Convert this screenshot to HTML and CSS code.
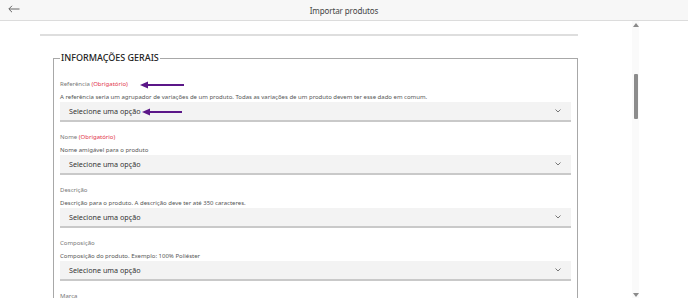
FILE: index.html
```html
<!DOCTYPE html>
<html lang="pt-BR">
  <head>
    <meta charset="UTF-8" />
    <meta name="viewport" content="width=device-width, initial-scale=1.0" />
    <title>Importar produtos</title>
    <link rel="stylesheet" href="styles.css">
  </head>
  <body>
    <header class="topbar">
      <button class="back-btn" aria-label="Voltar">
        <svg width="12" height="8" viewBox="0 0 12 8">
          <path d="M11.5 4H1 M4 0.8 L0.8 4 L4 7.2" fill="none" stroke="#666" stroke-width="1"/>
        </svg>
      </button>
      <h1>Importar produtos</h1>
    </header>

    <div class="main">
      <div class="content">
        <div class="divider"></div>

        <fieldset class="section">
          <legend>INFORMAÇÕES GERAIS</legend>

          <div class="field">
            <label>Referência <span class="req">(Obrigatório)</span></label>
            <svg class="pointer pointer-label" width="44" height="8" viewBox="0 0 44 8">
              <path d="M6 4H44" stroke="#5b1788" stroke-width="2"/>
              <path d="M0 4L8 0.5V7.5Z" fill="#5b1788"/>
            </svg>
            <p class="hint">A referência seria um agrupador de variações de um produto. Todas as variações de um produto devem ter esse dado em comum.</p>
            <div class="select">
              <span>Selecione uma opção</span>
              <svg class="chevron" width="6" height="4" viewBox="0 0 6 4"><path d="M0.5 0.5L3 3L5.5 0.5" fill="none" stroke="#777" stroke-width="1"/></svg>
            </div>
            <svg class="pointer pointer-select" width="40" height="8" viewBox="0 0 40 8">
              <path d="M6 4H40" stroke="#5b1788" stroke-width="2"/>
              <path d="M0 4L8 0.5V7.5Z" fill="#5b1788"/>
            </svg>
          </div>

          <div class="field">
            <label>Nome <span class="req">(Obrigatório)</span></label>
            <p class="hint">Nome amigável para o produto</p>
            <div class="select">
              <span>Selecione uma opção</span>
              <svg class="chevron" width="6" height="4" viewBox="0 0 6 4"><path d="M0.5 0.5L3 3L5.5 0.5" fill="none" stroke="#777" stroke-width="1"/></svg>
            </div>
          </div>

          <div class="field">
            <label>Descrição</label>
            <p class="hint">Descrição para o produto. A descrição deve ter até 350 caracteres.</p>
            <div class="select">
              <span>Selecione uma opção</span>
              <svg class="chevron" width="6" height="4" viewBox="0 0 6 4"><path d="M0.5 0.5L3 3L5.5 0.5" fill="none" stroke="#777" stroke-width="1"/></svg>
            </div>
          </div>

          <div class="field">
            <label>Composição</label>
            <p class="hint">Composição do produto. Exemplo: 100% Poliéster</p>
            <div class="select">
              <span>Selecione uma opção</span>
              <svg class="chevron" width="6" height="4" viewBox="0 0 6 4"><path d="M0.5 0.5L3 3L5.5 0.5" fill="none" stroke="#777" stroke-width="1"/></svg>
            </div>
          </div>

          <div class="field">
            <label>Marca</label>
          </div>
        </fieldset>
      </div>

      <div class="scrollbar">
        <span class="scroll-up"></span>
        <span class="scroll-thumb"></span>
        <span class="scroll-down"></span>
      </div>
    </div>
  </body>
</html>
```

FILE: styles.css
```css
html, body {
  margin: 0;
  height: 100%;
  overflow: hidden;
}

body {
  font-family: "Noto Sans", sans-serif;
  background-color: #ffffff;
  color: #333;
}

.topbar {
  position: relative;
  height: 20px;
  display: flex;
  align-items: center;
  justify-content: center;
  background-color: #f7f7f7;
  border-bottom: 1px solid #dcdcdc;
}

.topbar h1 {
  margin: 0;
  font-family: "Noto Sans", sans-serif;
  font-weight: 400;
  font-size: 8px;
  color: #444;
  letter-spacing: -0.1px;
}

.back-btn {
  position: absolute;
  left: 8px;
  top: 5px;
  padding: 0;
  border: none;
  background: none;
  line-height: 0;
}

.main {
  display: flex;
  height: 277px;
}

.content {
  width: 538px;
  padding-left: 40px;
  padding-top: 13px;
}

.divider {
  height: 2px;
  background-color: #dedede;
}

.section {
  margin: 16px 0 0 13px;
  padding: 16px 6px 0 6px;
  border: 1px solid #a8a8a8;
  border-bottom: none;
}

.section legend {
  padding: 0 1px;
  font-size: 9px;
  font-weight: 500;
  line-height: 12px;
  color: #222;
}

.field {
  position: relative;
  margin-bottom: 11px;
}

.field label {
  display: block;
  font-size: 6px;
  line-height: 8px;
  color: #777;
}

.req {
  color: #e2364c;
}

.hint {
  margin: 5px 0 1px;
  font-size: 6px;
  line-height: 8px;
  color: #555;
}

.select {
  display: flex;
  align-items: center;
  justify-content: space-between;
  height: 18px;
  padding: 0 9px;
  background-color: #f3f3f3;
  border-bottom: 2px solid #c9c9c9;
  font-size: 7.2px;
  color: #333;
}

.chevron {
  margin-right: 1px;
}

.pointer {
  position: absolute;
}

.pointer-label {
  left: 80px;
  top: 1px;
}

.pointer-select {
  left: 82px;
  top: 28px;
}

.scrollbar {
  margin-left: 54px;
  width: 7px;
  display: flex;
  flex-direction: column;
  align-items: center;
  background-color: #fafafa;
}

.scroll-up,
.scroll-down {
  width: 0;
  height: 0;
  border-left: 3px solid transparent;
  border-right: 3px solid transparent;
}

.scroll-up {
  margin-top: 2px;
  border-bottom: 4px solid #8a8a8a;
}

.scroll-thumb {
  margin-top: 47px;
  width: 4px;
  height: 45px;
  border-radius: 1px;
  background-color: #8c8c8c;
}

.scroll-down {
  margin-top: auto;
  margin-bottom: 1px;
  border-top: 4px solid #8a8a8a;
}
```
